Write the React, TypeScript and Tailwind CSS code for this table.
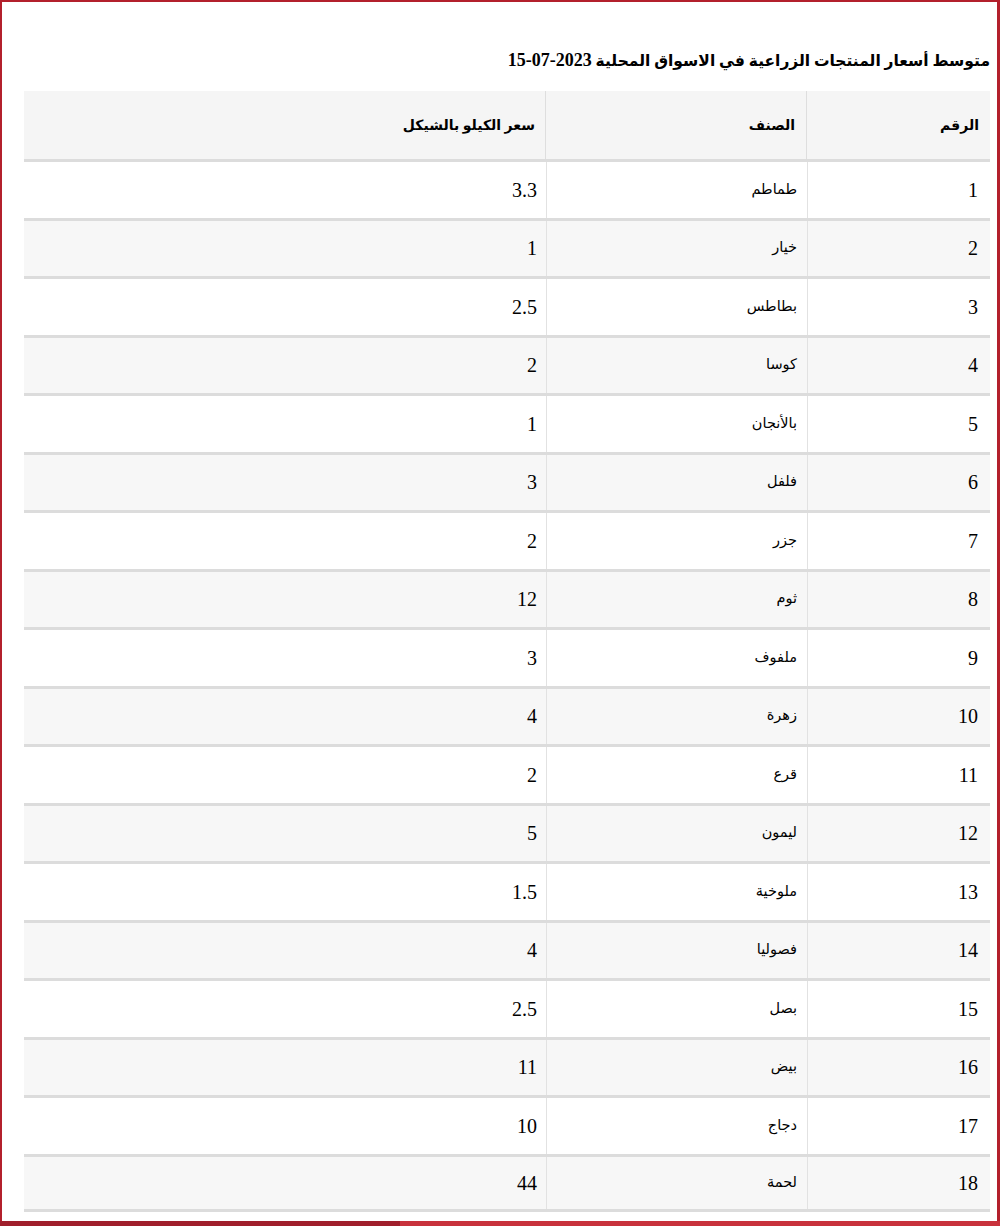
const rows: [number, string, string][] = [
  [1, "طماطم", "3.3"],
  [2, "خيار", "1"],
  [3, "بطاطس", "2.5"],
  [4, "كوسا", "2"],
  [5, "بالأنجان", "1"],
  [6, "فلفل", "3"],
  [7, "جزر", "2"],
  [8, "ثوم", "12"],
  [9, "ملفوف", "3"],
  [10, "زهرة", "4"],
  [11, "قرع", "2"],
  [12, "ليمون", "5"],
  [13, "ملوخية", "1.5"],
  [14, "فصوليا", "4"],
  [15, "بصل", "2.5"],
  [16, "بيض", "11"],
  [17, "دجاج", "10"],
  [18, "لحمة", "44"],
];

const font = { fontFamily: '"Liberation Serif", "DejaVu Sans", serif' };

export default function App() {
  return (
    <div className="flex h-[1226px] w-[1000px] flex-col bg-white text-black" style={font}>
      <div className="flex min-h-0 flex-1 flex-col border-l-2 border-r-[3px] border-t-2 border-[#b3202c] pl-[22px] pr-[7px]" dir="rtl">
        <h1 className="mt-[47px] h-[22px] text-[15.5px] font-bold leading-[22px]">
          متوسط أسعار المنتجات الزراعية في الاسواق المحلية <span className="text-[18px]">2023-07-15</span>
        </h1>
        <div className="mt-[20px] w-[966px]">
          <div className="flex h-[68px] bg-[#f5f5f5] text-[14px] font-bold">
            <div className="flex w-[183px] items-center pr-[11px]">الرقم</div>
            <div className="flex w-[261px] items-center border-r border-[#dedede] pr-[11px]">الصنف</div>
            <div className="flex flex-1 items-center border-r border-[#dedede] pr-[10px]">سعر الكيلو بالشيكل</div>
          </div>
          {rows.map(([n, name, price], i) => (
            <div
              key={n}
              className={`flex h-[58.5px] border-t-[3px] border-[#dcdcdc] ${i % 2 === 1 ? "bg-[#f7f7f7]" : "bg-white"} ${i === rows.length - 1 ? "border-b-[3px]" : ""}`}
            >
              <div className="flex w-[183px] items-center border-l border-[#e2e2e2] pr-[12px] text-[20px]">{n}</div>
              <div className="flex w-[261px] items-center border-l border-[#e2e2e2] pr-[10px] text-[14.5px]">{name}</div>
              <div className="flex flex-1 items-center pr-[9px] text-[20px]">{price}</div>
            </div>
          ))}
        </div>
      </div>
      <div className="flex h-[5px]">
        <div className="w-[400px] bg-[#a01f2c]" />
        <div className="flex-1 bg-[#c8323c]" />
      </div>
    </div>
  );
}
